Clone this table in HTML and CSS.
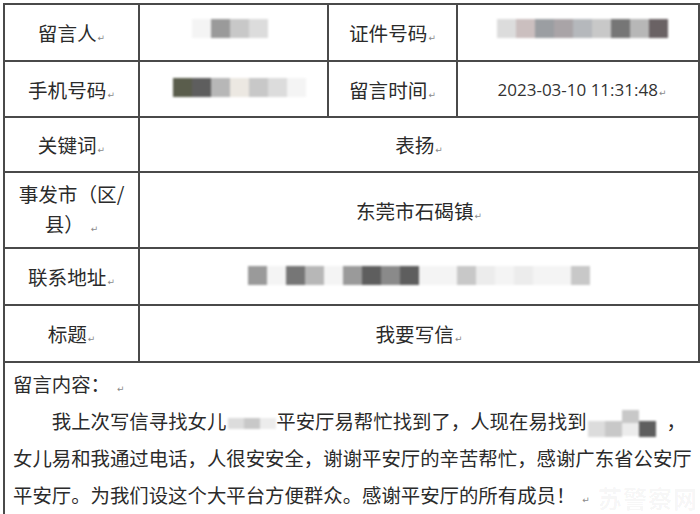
FILE: index.html
```html
<!DOCTYPE html>
<html lang="zh-CN">
<head>
<meta charset="utf-8">
<title>留言</title>
<link rel="stylesheet" href="styles.css">
</head>
<body>
<div class="sheet">
  <div class="form">
    <div class="cell label"><span class="txt">留言人<span class="rm">↵</span></span></div>
    <div class="cell blurcell pad-a">
      <span class="mask"><i class="s w9"></i><i class="s g5"></i><i class="s g7"></i><i class="s g8"></i></span>
    </div>
    <div class="cell label"><span class="txt">证件号码<span class="rm">↵</span></span></div>
    <div class="cell blurcell pad-c">
      <span class="mask"><i class="s g8"></i><i class="s p7"></i><i class="s b5"></i><i class="s p6"></i><i class="s b6"></i><i class="s g7"></i><i class="s g3"></i><i class="s g6"></i><i class="s d2"></i></span>
    </div>

    <div class="cell label"><span class="txt">手机号码<span class="rm">↵</span></span></div>
    <div class="cell blurcell pad-b">
      <span class="mask"><i class="s o2"></i><i class="s g2"></i><i class="s g6"></i><i class="s c9"></i><i class="s g7"></i><i class="s g8"></i><i class="s w9"></i></span>
    </div>
    <div class="cell label"><span class="txt">留言时间<span class="rm">↵</span></span></div>
    <div class="cell value date"><span class="txt">2023-03-10 11:31:48<span class="rm">↵</span></span></div>

    <div class="cell label"><span class="txt">关键词<span class="rm">↵</span></span></div>
    <div class="cell value wide"><span class="txt">表扬<span class="rm">↵</span></span></div>

    <div class="cell label twoline"><span class="txt">事发市（区/<br>县）<span class="rm gapmark">↵</span></span></div>
    <div class="cell value wide"><span class="txt">东莞市石碣镇<span class="rm">↵</span></span></div>

    <div class="cell label"><span class="txt">联系地址<span class="rm">↵</span></span></div>
    <div class="cell blurcell wide pad-d">
      <span class="mask"><i class="s g5"></i><i class="s w9"></i><i class="s g3"></i><i class="s g6"></i><i class="s w9"></i><i class="s g5"></i><i class="s g2"></i><i class="s g4"></i><i class="s g2"></i><i class="s w9"></i><i class="s w9"></i><i class="s g7"></i><i class="s w8"></i><i class="s w9"></i><i class="s w8"></i><i class="s w9"></i><i class="s w9"></i><i class="s g7"></i></span>
    </div>

    <div class="cell label"><span class="txt">标题<span class="rm">↵</span></span></div>
    <div class="cell value wide"><span class="txt">我要写信<span class="rm">↵</span></span></div>

    <div class="cell content">
      <p class="line">留言内容：<span class="rm gapmark">↵</span></p>
      <p class="line indent">我上次写信寻找女儿<span class="imask gap1"><i class="t g8"></i><i class="t g7"></i><i class="t w8"></i></span>平安厅易帮忙找到了，人现在易找到<span class="imask gap2"><i class="t g8"></i><i class="t g7"></i><i class="t stack"><i class="u g7"></i><i class="u w8"></i></i><i class="t g2"></i></span>，</p>
      <p class="line">女儿易和我通过电话，人很安安全，谢谢平安厅的辛苦帮忙，感谢广东省公安厅</p>
      <p class="line">平安厅。为我们设这个大平台方便群众。感谢平安厅的所有成员！<span class="rm gapmark">↵</span></p>
    </div>
  </div>
  <div class="watermark">苏警察网</div>
</div>
</body>
</html>
```
FILE: styles.css
```css
html, body {
  margin: 0;
  padding: 0;
  background: #ffffff;
}

body {
  width: 700px;
  height: 514px;
  overflow: hidden;
  font-family: "Noto Sans CJK SC", "Noto Sans", sans-serif;
  color: #2b2b2b;
}

.sheet {
  position: relative;
  padding: 3px 0 0 3px;
}

.form {
  display: grid;
  grid-template-columns: 135px 189px 129px 242px;
  grid-template-rows: 57px 56px 55px 76px 57px 57px 160px;
  border-left: 2px solid #4a4a4a;
  border-top: 2px solid #4a4a4a;
  width: 697px;
  box-sizing: border-box;
}

.cell {
  box-sizing: border-box;
  border-right: 2px solid #4a4a4a;
  border-bottom: 2px solid #4a4a4a;
  font-size: 19.6px;
  display: flex;
  align-items: center;
  justify-content: center;
  text-align: center;
  white-space: nowrap;
}

.txt {
  display: inline-block;
}

.label {
  padding: 0 7px;
}

.twoline {
  line-height: 30px;
  padding: 2px 7px 0;
}

.wide {
  grid-column: 2 / 5;
}

.date {
  font-family: "Open Sans", "Noto Sans", sans-serif;
  font-size: 17px;
  padding-left: 8px;
  color: #333;
}

.rm {
  font-family: "DejaVu Sans", sans-serif;
  font-size: 9px;
  color: #8a8a8a;
  margin-left: 1px;
  vertical-align: baseline;
}

.gapmark {
  margin-left: 7px;
}

.blurcell {
  justify-content: flex-start;
}

.pad-a { padding-left: 52px; padding-bottom: 9px; }
.pad-b { padding-left: 33px; padding-bottom: 4px; }
.pad-c { padding-left: 39px; padding-bottom: 9px; }
.pad-d { padding-left: 108px; padding-bottom: 2px; }

.mask {
  display: flex;
  filter: blur(1.2px);
}

.s {
  display: block;
  width: 19px;
  height: 19px;
}

.content {
  grid-column: 1 / 5;
  display: block;
  text-align: left;
  padding: 2px 0 0 8px;
  border-right: none;
  border-bottom: none;
  font-size: 19.4px;
}

.line {
  margin: 0;
  line-height: 37px;
  height: 37px;
  white-space: nowrap;
}

.indent {
  text-indent: 2em;
}

.imask {
  display: inline-flex;
  align-items: flex-end;
  vertical-align: middle;
  filter: blur(1px);
  text-indent: 0;
}

.gap1 {
  width: 50px;
  padding-left: 2px;
  box-sizing: border-box;
}

.gap2 {
  width: 80px;
  padding-left: 1px;
  box-sizing: border-box;
}

.t {
  display: block;
  width: 17px;
  height: 16px;
}

.gap1 .t {
  height: 11px;
}

.stack {
  display: flex;
  flex-direction: column;
  height: 27px;
}

.u {
  display: block;
  width: 17px;
  height: 13px;
}

.g2 { background: #5e5e5e; }
.g3 { background: #767676; }
.g4 { background: #8a8a8a; }
.g5 { background: #9a9a9a; }
.g6 { background: #b7b7b7; }
.g7 { background: #c8c8c8; }
.g8 { background: #dcdcdc; }
.w8 { background: #ececec; }
.w9 { background: #f4f4f4; }
.c9 { background: #ece8e2; }
.o2 { background: #5a5d4c; }
.d2 { background: #6a6264; }
.p6 { background: #a9a4a7; }
.p7 { background: #cbbfbf; }
.b5 { background: #9b9ea2; }
.b6 { background: #b5b8bc; }

.watermark {
  position: absolute;
  left: 598px;
  top: 480px;
  font-size: 24px;
  font-weight: 700;
  letter-spacing: 1px;
  color: rgba(0, 0, 0, 0.045);
  white-space: nowrap;
}
```
